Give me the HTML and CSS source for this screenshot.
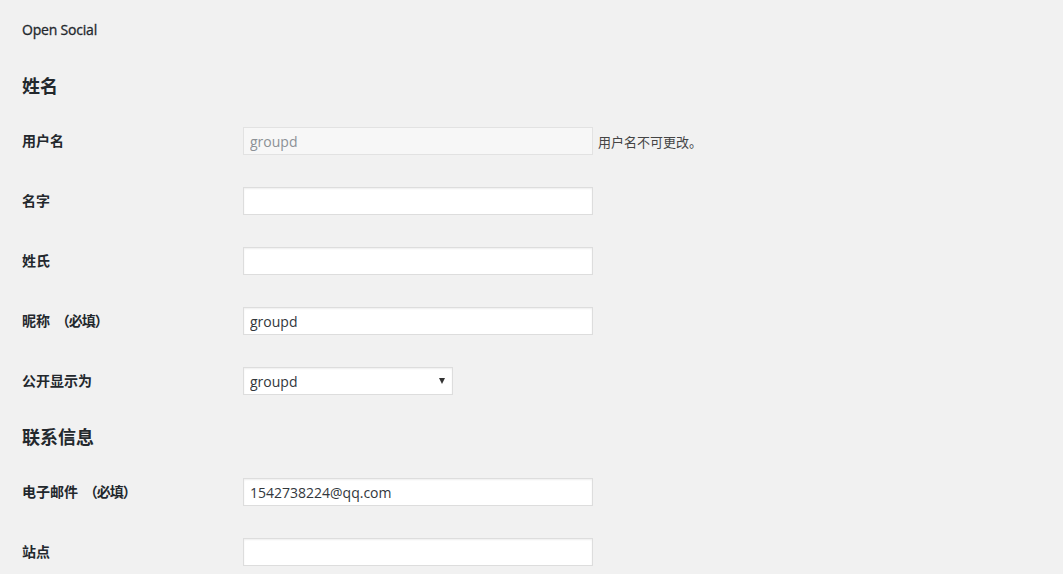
FILE: index.html
```html
<!DOCTYPE html>
<html lang="zh-CN">
<head>
<meta charset="utf-8">
<title>个人资料</title>
<link rel="stylesheet" href="styles.css">
</head>
<body>
<div class="wrap">
  <div class="plugin-title">Open Social</div>

  <h2 class="section-title first">姓名</h2>
  <div class="form-table">
    <div class="row">
      <label class="row-label">用户名</label>
      <div class="field">
        <input class="text-input disabled" type="text" value="groupd" disabled>
        <span class="description">用户名不可更改。</span>
      </div>
    </div>
    <div class="row">
      <label class="row-label">名字</label>
      <div class="field"><input class="text-input" type="text" value=""></div>
    </div>
    <div class="row">
      <label class="row-label">姓氏</label>
      <div class="field"><input class="text-input" type="text" value=""></div>
    </div>
    <div class="row">
      <label class="row-label">昵称 <span class="req">（必填）</span></label>
      <div class="field"><input class="text-input" type="text" value="groupd"></div>
    </div>
    <div class="row">
      <label class="row-label">公开显示为</label>
      <div class="field">
        <span class="select-wrap">
          <select class="select"><option>groupd</option></select>
        </span>
      </div>
    </div>
  </div>

  <h2 class="section-title">联系信息</h2>
  <div class="form-table">
    <div class="row">
      <label class="row-label">电子邮件 <span class="req">（必填）</span></label>
      <div class="field"><input class="text-input" type="text" value="1542738224@qq.com"></div>
    </div>
    <div class="row">
      <label class="row-label">站点</label>
      <div class="field"><input class="text-input" type="text" value=""></div>
    </div>
  </div>
</div>
</body>
</html>
```
FILE: styles.css
```css
html, body {
  margin: 0;
  padding: 0;
  background: #f1f1f1;
}

body {
  color: #23282d;
  font-family: "Open Sans", "Noto Sans CJK SC", sans-serif;
  font-size: 13px;
  overflow: hidden;
}

.wrap {
  padding: 20px 22px 0 22px;
}

.plugin-title {
  font-size: 14px;
  font-weight: 400;
  letter-spacing: -0.2px;
  -webkit-text-stroke: 0.3px #23282d;
  line-height: 20px;
  height: 20px;
  color: #23282d;
}

.section-title {
  font-size: 18px;
  font-weight: 700;
  line-height: 24px;
  margin: 14px 0 13px 0;
  color: #23282d;
}

.section-title.first {
  margin-top: 34px;
}

.form-table {
  display: flex;
  flex-direction: column;
}

.row {
  display: grid;
  grid-template-columns: 221px auto;
  align-items: center;
  height: 60px;
}

.row-label {
  font-size: 14px;
  font-weight: 700;
  line-height: 18px;
  color: #23282d;
}

.req {
  font-weight: 700;
  margin-left: 2px;
  letter-spacing: -1px;
}

.field {
  display: flex;
  align-items: center;
}

.text-input {
  box-sizing: border-box;
  width: 350px;
  height: 28px;
  margin: 0;
  padding: 3px 6px;
  border: 1px solid #ddd;
  box-shadow: inset 0 1px 2px rgba(0, 0, 0, 0.07);
  background: #fff;
  color: #32373c;
  font-family: "Open Sans", "Noto Sans CJK SC", sans-serif;
  font-size: 14px;
  outline: none;
  border-radius: 0;
}

.text-input.disabled {
  background: #f7f7f7;
  border-color: #e2e2e2;
  color: #8c9196;
  box-shadow: none;
}

.description {
  margin-left: 5px;
  font-size: 13px;
  color: #444;
}

.select-wrap {
  position: relative;
  display: inline-block;
}

.select {
  box-sizing: border-box;
  width: 210px;
  height: 28px;
  margin: 0;
  padding: 2px 24px 2px 6px;
  border: 1px solid #ddd;
  box-shadow: inset 0 1px 2px rgba(0, 0, 0, 0.07);
  background: #fff;
  color: #32373c;
  font-family: "Open Sans", "Noto Sans CJK SC", sans-serif;
  font-size: 14px;
  -webkit-appearance: none;
  appearance: none;
  border-radius: 0;
  outline: none;
}

.select-wrap::after {
  content: "";
  position: absolute;
  right: 8px;
  top: 11px;
  width: 0;
  height: 0;
  border-left: 3px solid transparent;
  border-right: 3px solid transparent;
  border-top: 6px solid #333;
  pointer-events: none;
}
```
